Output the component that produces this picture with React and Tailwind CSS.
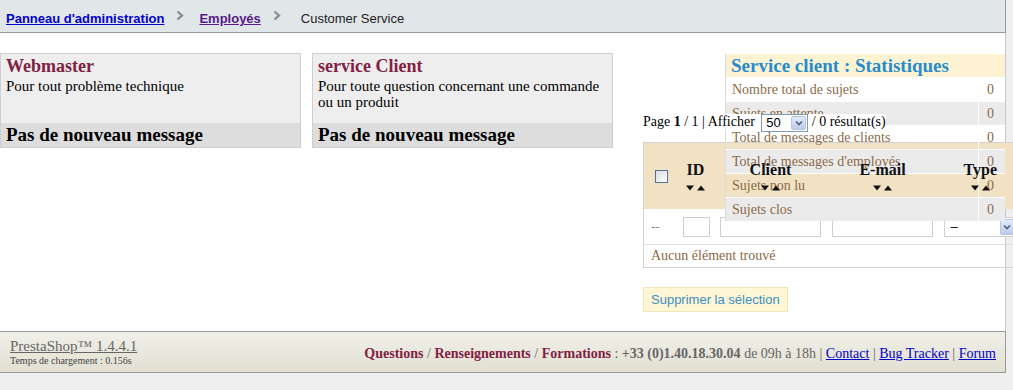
import { useState } from 'react';

const stats = [
  { label: 'Nombre total de sujets', value: 0 },
  { label: 'Sujets en attente', value: 0 },
  { label: 'Total de messages de clients', value: 0 },
  { label: "Total de messages d'employés", value: 0 },
  { label: 'Sujets non lu', value: 0 },
  { label: 'Sujets clos', value: 0 },
];

const contacts = [
  { name: 'Webmaster', desc: 'Pour tout problème technique' },
  { name: 'service Client', desc: 'Pour toute question concernant une commande ou un produit' },
];

const Chevron = () => (
  <svg width="8" height="11" viewBox="0 0 8 11" className="mx-[12px] mb-[8px] shrink-0">
    <path d="M1.5 1.5 L6 5.5 L1.5 9.5" fill="none" stroke="#8a8a8a" strokeWidth="2.2" />
  </svg>
);

const SortArrows = () => (
  <svg width="19" height="6" viewBox="0 0 19 6" className="mt-[7px] block">
    <polygon points="0,0.5 8,0.5 4,5.5" fill="#111" />
    <polygon points="11,5.5 19,5.5 15,0.5" fill="#111" />
  </svg>
);

const DropArrow = () => (
  <span className="m-[1px] flex w-[15px] shrink-0 items-center justify-center rounded-[2px] border border-[#b5c5e5] bg-gradient-to-b from-[#e3ebfb] to-[#bccbeb]">
    <svg width="8" height="6" viewBox="0 0 8 6">
      <path d="M1 1.5 L4 4.5 L7 1.5" fill="none" stroke="#4d6185" strokeWidth="1.6" />
    </svg>
  </span>
);

const HeaderCell = ({ label }) => (
  <th className="p-0 align-middle">
    <div className="relative z-20 flex flex-col items-center">
      <span className="text-[16px] font-bold leading-[16px] text-[#111]">{label}</span>
      <SortArrows />
    </div>
  </th>
);

export default function App() {
  const [perPage] = useState(50);

  return (
    <div className="h-[390px] w-[1013px] overflow-hidden bg-[#efefef] font-['Liberation_Serif',serif] text-black">
      {/* breadcrumb */}
      <div className="flex h-[33px] w-[1006px] items-center border-r border-b border-[#9a9a9a] bg-[#e1e6e8] pl-[6px] pt-[6px] font-['Liberation_Sans',sans-serif] text-[13px]">
        <a href="#" className="font-bold text-[#0000cc] underline">Panneau d'administration</a>
        <Chevron />
        <a href="#" className="ml-[3px] font-bold text-[#551a8b] underline">Employés</a>
        <Chevron />
        <span className="ml-[8px] text-[#222]">Customer Service</span>
      </div>

      {/* content */}
      <div className="relative flex h-[298px] w-[1006px] items-start border-r border-[#c8c8c8] bg-white">
        <div className="mt-[20px] flex shrink-0 gap-[11px]">
          {contacts.map(c => (
            <div key={c.name} className="flex h-[95px] w-[301px] flex-col border border-[#cfcfcf] bg-[#eeeeee]">
              <div className="flex-1 px-[5px] pt-[1px]">
                <div className="text-[18px] font-bold leading-[22px] text-[#812143]">{c.name}</div>
                <div className="mt-[1px] text-[15px] leading-[16px]">{c.desc}</div>
              </div>
              <div className="h-[24px] bg-[#dddddd] px-[5px] text-[19px] font-bold leading-[24px]">Pas de nouveau message</div>
            </div>
          ))}
        </div>

        <div className="ml-[30px] mt-[80px] flex w-[379px] shrink-0 flex-col items-start">
          <div className="relative z-20 whitespace-nowrap text-[14px] leading-[18px]">
            <span className="bg-white">
              Page <b>1</b> / 1 | Afficher{' '}
              <span className="ml-[3px] inline-flex h-[18px] w-[47px] items-stretch border border-[#7f9db9] bg-white align-middle">
                <span className="flex-1 pl-[4px] font-['Liberation_Sans',sans-serif] text-[13px] leading-[16px]">{perPage}</span>
                <DropArrow />
              </span>{' '}
              / 0 résultat(s)
            </span>
          </div>

          <table className="mt-[10px] w-[379px] table-fixed border-collapse border border-[#d2d2d2]">
            <colgroup>
              <col className="w-[33px]" />
              <col className="w-[38px]" />
              <col className="w-[112px]" />
              <col className="w-[112px]" />
              <col className="w-[84px]" />
            </colgroup>
            <thead>
              <tr className="h-[67px] bg-[#f1e2c4]">
                <th className="p-0 align-middle">
                  <div className="relative z-20 ml-[11px] h-[13px] w-[13px] border border-[#557191] bg-gradient-to-br from-[#d6dde6] to-white" />
                </th>
                <HeaderCell label="ID" />
                <HeaderCell label="Client" />
                <HeaderCell label="E-mail" />
                <HeaderCell label="Type" />
              </tr>
            </thead>
            <tbody>
              <tr className="h-[35px]">
                <td className="pl-[7px] text-[13px] text-[#888]">--</td>
                <td className="pl-[6px]">
                  <input className="block h-[20px] w-[27px] border border-[#cfcfcf] bg-white" />
                </td>
                <td className="pl-[5px]">
                  <input className="block h-[20px] w-[101px] border border-[#cfcfcf] bg-white" />
                </td>
                <td className="pl-[5px]">
                  <input className="block h-[20px] w-[101px] border border-[#cfcfcf] bg-white" />
                </td>
                <td className="pl-[5px]">
                  <span className="flex h-[20px] w-[73px] items-stretch border border-[#cfcfcf] bg-white">
                    <span className="flex-1 pl-[6px] font-['Liberation_Sans',sans-serif] text-[13px] leading-[18px]">–</span>
                    <DropArrow />
                  </span>
                </td>
              </tr>
              <tr className="h-[23px] border-t border-[#dedede]">
                <td colSpan={5} className="pl-[7px] text-[14px] text-[#8b6a47]">Aucun élément trouvé</td>
              </tr>
            </tbody>
          </table>

          <button className="mt-[19px] h-[25px] border border-[#f2e5b8] bg-[#fff6d5] px-[7px] font-['Liberation_Sans',sans-serif] text-[13px] text-[#3a8fc2]">
            Supprimer la sélection
          </button>
        </div>

        {/* statistics box floats over the list */}
        <div className="absolute left-[725px] top-[21px] z-10 w-[280px] border-l border-[#dcdcdc]">
          <div className="h-[23px] bg-[#fdf3d2] pl-[5px] text-[19px] font-bold leading-[23px] text-[#268ccd]">
            Service client : Statistiques
          </div>
          {stats.map((s, i) => (
            <div key={s.label} className={`flex h-[24px] border-t border-white text-[14px] leading-[23px] text-[#8b6a47] ${i % 2 ? 'bg-[#ebebeb]' : ''}`}>
              <div className="flex-1 pl-[6px]">{s.label}</div>
              <div className="w-[27px] border-l border-white pr-[11px] text-right">{s.value}</div>
            </div>
          ))}
        </div>
      </div>

      {/* footer */}
      <div className="flex h-[42px] w-[1006px] items-center justify-between border-y border-r border-[#9a9a9a] bg-gradient-to-b from-[#f1f0e9] to-[#e2e0d2] pl-[10px] pr-[9px]">
        <div className="flex flex-col">
          <a href="#" className="text-[15px] leading-[16px] text-[#666] underline">PrestaShop™ 1.4.4.1</a>
          <span className="text-[10px] leading-[13px] text-[#444]">Temps de chargement : 0.156s</span>
        </div>
        <div className="pt-[2px] text-[14px] text-[#666]">
          <span className="font-bold text-[#812143]">Questions</span> / <span className="font-bold text-[#812143]">Renseignements</span> / <span className="font-bold text-[#812143]">Formations</span> : <b>+33 (0)1.40.18.30.04</b> de 09h à 18h | <a href="#" className="text-[#0000cc] underline">Contact</a> | <a href="#" className="text-[#0000cc] underline">Bug Tracker</a> | <a href="#" className="text-[#0000cc] underline">Forum</a>
        </div>
      </div>
    </div>
  );
}
